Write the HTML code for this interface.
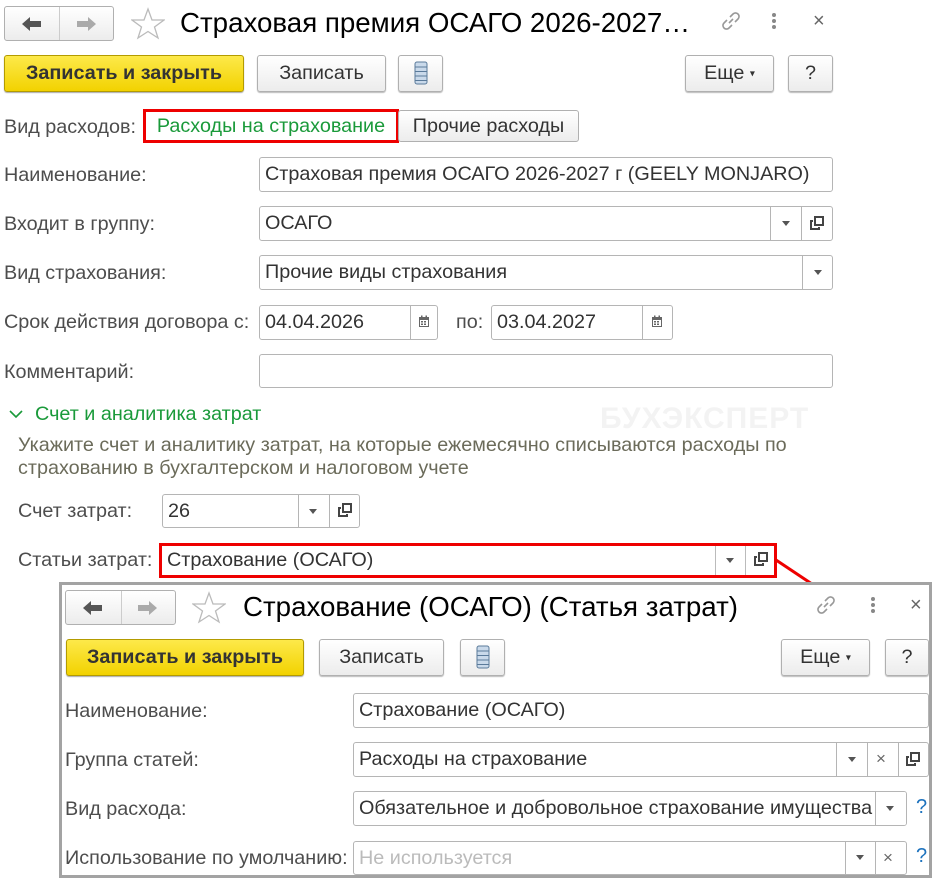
<!DOCTYPE html>
<html><head><meta charset="utf-8"><style>
*{box-sizing:border-box;margin:0;padding:0}
body{width:934px;height:879px;background:#fff;position:relative;overflow:hidden;font-family:"Liberation Sans","DejaVu Sans",sans-serif;color:#333}
.a{position:absolute}
.lbl{position:absolute;font-size:19.8px;color:#4d4d4d;line-height:22px;white-space:nowrap}
.inp{position:absolute;border:1px solid #b5b5b5;border-radius:3px;background:#fff;font-size:19.8px;color:#333;line-height:22px;padding:5px 0 0 5px;white-space:nowrap;overflow:hidden}
.sep{position:absolute;top:0;bottom:0;border-left:1px solid #b5b5b5}
.dd{position:absolute;width:0;height:0;border-left:4px solid transparent;border-right:4px solid transparent;border-top:5px solid #555}
.btn{position:absolute;border:1px solid #b0b0b0;border-radius:3px;background:linear-gradient(#fff,#ececec);box-shadow:0 1px 1px #bbb;font-size:19.8px;color:#333;text-align:center;white-space:nowrap}
.ybtn{position:absolute;border:1px solid #b39b00;border-radius:3px;background:linear-gradient(#fde94a,#f2d200);box-shadow:0 1px 1px #aaa;font-size:19.8px;font-weight:bold;color:#333;text-align:center;white-space:nowrap}
.title{position:absolute;font-size:27.7px;color:#000;white-space:nowrap}
.q{position:absolute;color:#1e73be;font-size:20px}
</style></head><body>

<svg width="0" height="0" style="position:absolute">
<defs>
<g id="open"><rect x="5" y="1" width="8" height="8" fill="none" stroke="#444" stroke-width="2"/><path d="M3 5 H1 V13 H9 V11" fill="none" stroke="#444" stroke-width="2"/></g>
<g id="cal"><rect x="1" y="2" width="10" height="10" fill="#666"/><rect x="2" y="5" width="8" height="6" fill="#fff"/><rect x="3" y="6" width="2" height="1.5" fill="#666"/><rect x="6" y="6" width="2" height="1.5" fill="#666"/><rect x="3" y="8.5" width="2" height="1.5" fill="#666"/><rect x="6" y="8.5" width="2" height="1.5" fill="#666"/><rect x="3" y="0.5" width="1.5" height="3" fill="#666"/><rect x="7.5" y="0.5" width="1.5" height="3" fill="#666"/></g>
<g id="star"><path d="M17 2 L21 13 L33 13 L23.5 20 L27 31 L17 24.5 L7 31 L10.5 20 L1 13 L13 13 Z" fill="none" stroke="#bbb" stroke-width="1.3"/></g>
<g id="list"><rect x="1" y="1" width="12" height="22" rx="2" fill="#c9d9ea" stroke="#5a7a9a"/><path d="M1 6 H13 M1 10.5 H13 M1 15 H13 M1 19.5 H13" stroke="#5a7a9a"/></g>
<g id="link"><path d="M9 13 L13 9 M7 10 L4 13 A3 3 0 0 0 9 18 L12 15 M15 12 L18 9 A3 3 0 0 0 13 4 L10 7" fill="none" stroke="#999" stroke-width="1.6"/></g>
</defs></svg>

<div class="btn" style="left:4px;top:6px;width:110px;height:35px;box-shadow:none"></div>
<div class="a" style="left:59px;top:7px;height:33px;border-left:1px solid #ccc"></div>
<svg class="a" style="left:20px;top:14px" width="24" height="20"><path d="M2 10 L10 3 V7 H21 V13 H10 V17 Z" fill="#555"/></svg>
<svg class="a" style="left:74px;top:14px" width="24" height="20"><path d="M22 10 L14 3 V7 H3 V13 H14 V17 Z" fill="#aaa"/></svg>
<svg class="a" style="left:131px;top:7px" width="34" height="34"><use href="#star"/></svg>
<div class="title" style="left:180px;top:7px">Страховая премия ОСАГО 2026-2027…</div>
<svg class="a" style="left:720px;top:10px" width="24" height="24"><use href="#link"/></svg>
<svg class="a" style="left:770px;top:12px" width="8" height="20"><circle cx="4" cy="3" r="2" fill="#888"/><circle cx="4" cy="9" r="2" fill="#888"/><circle cx="4" cy="15" r="2" fill="#888"/></svg>
<div class="a" style="left:813px;top:10px;font-size:20px;color:#666">×</div>

<div class="ybtn" style="left:4px;top:55px;width:240px;height:37px;line-height:35px">Записать и закрыть</div>
<div class="btn" style="left:257px;top:55px;width:129px;height:37px;line-height:35px">Записать</div>
<div class="btn" style="left:398px;top:55px;width:45px;height:37px"><svg style="margin-top:5px" width="14" height="24"><use href="#list"/></svg></div>
<div class="btn" style="left:685px;top:55px;width:89px;height:37px;line-height:35px">Еще <span style="font-size:10px;vertical-align:middle">▾</span></div>
<div class="btn" style="left:788px;top:55px;width:45px;height:37px;line-height:35px">?</div>

<div class="lbl" style="left:4px;top:116px">Вид расходов:</div>
<div class="a" style="left:143px;top:109px;width:256px;height:34px;border:3px solid #e00;font-size:19.8px;color:#1a9a3a;text-align:center;line-height:28px">Расходы на страхование</div>
<div class="btn" style="left:398px;top:110px;width:181px;height:32px;line-height:31px;box-shadow:none">Прочие расходы</div>

<div class="lbl" style="left:4px;top:164px">Наименование:</div>
<div class="inp" style="left:259px;top:157px;width:574px;height:35px">Страховая премия ОСАГО 2026-2027 г (GEELY MONJARO)</div>

<div class="lbl" style="left:4px;top:213px">Входит в группу:</div>
<div class="inp" style="left:259px;top:206px;width:574px;height:35px">ОСАГО<div class="sep" style="left:510px"></div><div class="sep" style="left:541px"></div><div class="dd" style="left:522px;top:14px"></div><svg class="a" style="left:550px;top:9px" width="14" height="14"><use href="#open"/></svg></div>

<div class="lbl" style="left:4px;top:262px">Вид страхования:</div>
<div class="inp" style="left:259px;top:255px;width:574px;height:35px">Прочие виды страхования<div class="sep" style="left:542px"></div><div class="dd" style="left:554px;top:14px"></div></div>

<div class="lbl" style="left:4px;top:311px">Срок действия договора с:</div>
<div class="inp" style="left:259px;top:305px;width:179px;height:35px">04.04.2026<div class="sep" style="left:150px"></div><svg class="a" style="left:158px;top:9px" width="12" height="13"><use href="#cal"/></svg></div>
<div class="lbl" style="left:456px;top:311px">по:</div>
<div class="inp" style="left:491px;top:305px;width:182px;height:35px">03.04.2027<div class="sep" style="left:150px"></div><svg class="a" style="left:159px;top:9px" width="12" height="13"><use href="#cal"/></svg></div>

<div class="lbl" style="left:4px;top:361px">Комментарий:</div>
<div class="inp" style="left:259px;top:354px;width:574px;height:34px"></div>

<svg class="a" style="left:8px;top:408px" width="16" height="12"><path d="M2 3 L8 9 L14 3" fill="none" stroke="#1a9a3a" stroke-width="1.6"/></svg>
<div class="lbl" style="left:35px;top:403px;color:#1a9a3a">Счет и аналитика затрат</div>
<div class="a" style="left:600px;top:402px;font-size:30px;font-weight:bold;color:#f3f3f3;letter-spacing:1px">БУХЭКСПЕРТ</div>
<div class="lbl" style="left:18px;top:434px;color:#6b6b5a">Укажите счет и аналитику затрат, на которые ежемесячно списываются расходы по</div>
<div class="lbl" style="left:18px;top:457px;color:#6b6b5a">страхованию в бухгалтерском и налоговом учете</div>

<div class="lbl" style="left:18px;top:500px">Счет затрат:</div>
<div class="inp" style="left:162px;top:494px;width:198px;height:34px">26<div class="sep" style="left:135px"></div><div class="sep" style="left:166px"></div><div class="dd" style="left:146px;top:14px"></div><svg class="a" style="left:175px;top:8px" width="14" height="14"><use href="#open"/></svg></div>

<div class="lbl" style="left:18px;top:549px">Статьи затрат:</div>
<div class="a" style="left:159px;top:543px;width:618px;height:35px;border:3px solid #e00;font-size:19.8px;line-height:28px;padding-left:5px;color:#333;white-space:nowrap">Страхование (ОСАГО)<div class="sep" style="left:553px;border-color:#bbb"></div><div class="sep" style="left:583px;border-color:#bbb"></div><div class="dd" style="left:564px;top:12px"></div><svg class="a" style="left:592px;top:6px" width="14" height="14"><use href="#open"/></svg></div>
<svg class="a" style="left:775px;top:558px" width="45" height="28"><path d="M1 2 L37 26" stroke="#e00" stroke-width="3"/></svg>

<div class="a" style="left:59px;top:582px;width:873px;height:296px;border:3px solid #a3a3a3;background:#fff"></div>
<div class="btn" style="left:65px;top:590px;width:111px;height:35px;box-shadow:none"></div>
<div class="a" style="left:121px;top:591px;height:33px;border-left:1px solid #ccc"></div>
<svg class="a" style="left:81px;top:598px" width="24" height="20"><path d="M2 10 L10 3 V7 H21 V13 H10 V17 Z" fill="#555"/></svg>
<svg class="a" style="left:135px;top:598px" width="24" height="20"><path d="M22 10 L14 3 V7 H3 V13 H14 V17 Z" fill="#aaa"/></svg>
<svg class="a" style="left:192px;top:591px" width="34" height="34"><use href="#star"/></svg>
<div class="title" style="left:243px;top:591px">Страхование (ОСАГО) (Статья затрат)</div>
<svg class="a" style="left:815px;top:594px" width="24" height="24"><use href="#link"/></svg>
<svg class="a" style="left:869px;top:596px" width="8" height="20"><circle cx="4" cy="3" r="2" fill="#888"/><circle cx="4" cy="9" r="2" fill="#888"/><circle cx="4" cy="15" r="2" fill="#888"/></svg>
<div class="a" style="left:910px;top:594px;font-size:20px;color:#666">×</div>

<div class="ybtn" style="left:66px;top:639px;width:238px;height:37px;line-height:35px">Записать и закрыть</div>
<div class="btn" style="left:319px;top:639px;width:125px;height:37px;line-height:35px">Записать</div>
<div class="btn" style="left:460px;top:639px;width:45px;height:37px"><svg style="margin-top:5px" width="14" height="24"><use href="#list"/></svg></div>
<div class="btn" style="left:781px;top:639px;width:89px;height:37px;line-height:35px">Еще <span style="font-size:10px;vertical-align:middle">▾</span></div>
<div class="btn" style="left:885px;top:639px;width:44px;height:37px;line-height:35px">?</div>

<div class="lbl" style="left:65px;top:700px">Наименование:</div>
<div class="inp" style="left:353px;top:693px;width:576px;height:35px">Страхование (ОСАГО)</div>

<div class="lbl" style="left:65px;top:749px">Группа статей:</div>
<div class="inp" style="left:353px;top:742px;width:576px;height:35px">Расходы на страхование<div class="sep" style="left:482px"></div><div class="sep" style="left:513px"></div><div class="sep" style="left:544px"></div><div class="dd" style="left:494px;top:14px"></div><div class="a" style="left:522px;top:5px;color:#666;font-size:17px">×</div><svg class="a" style="left:552px;top:9px" width="14" height="14"><use href="#open"/></svg></div>

<div class="lbl" style="left:65px;top:798px">Вид расхода:</div>
<div class="inp" style="left:353px;top:791px;width:554px;height:35px">Обязательное и добровольное страхование имущества<div class="sep" style="left:521px;background:#fff;width:40px"></div><div class="dd" style="left:532px;top:14px"></div></div>
<div class="q" style="left:916px;top:796px">?</div>

<div class="lbl" style="left:65px;top:847px">Использование по умолчанию:</div>
<div class="inp" style="left:353px;top:841px;width:554px;height:34px;color:#bbb">Не используется<div class="sep" style="left:491px"></div><div class="sep" style="left:521px"></div><div class="dd" style="left:502px;top:13px"></div><div class="a" style="left:529px;top:5px;color:#666;font-size:17px">×</div></div>
<div class="q" style="left:916px;top:845px">?</div>

</body></html>
